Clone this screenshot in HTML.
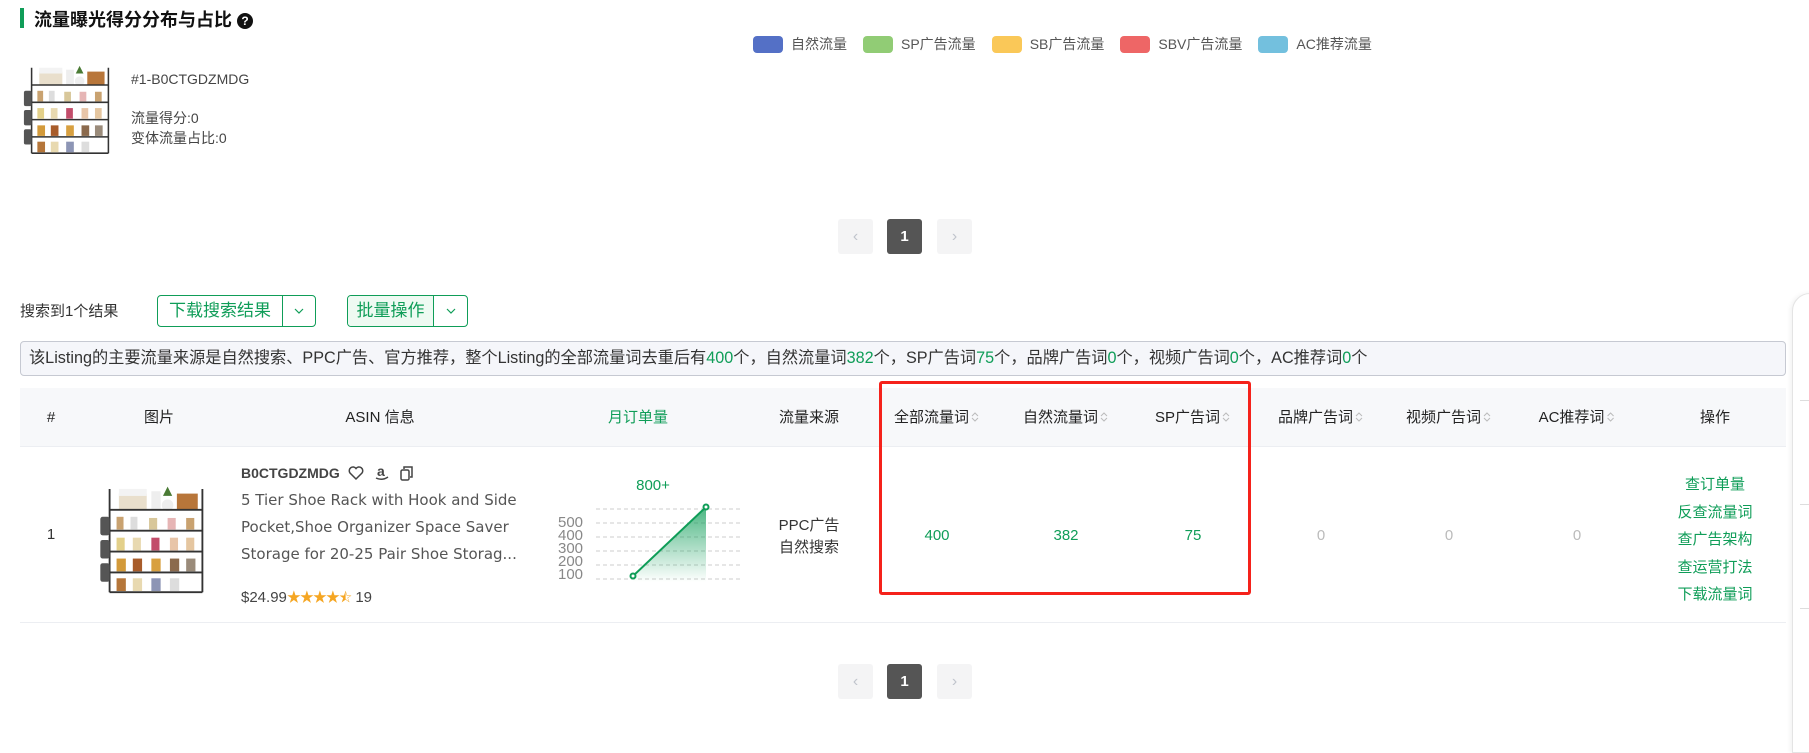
<!DOCTYPE html>
<html><head><meta charset="utf-8"><style>
*{box-sizing:border-box;margin:0;padding:0}
body{width:1809px;height:737px;overflow:hidden;background:#fff;font-family:"Liberation Sans","Noto Sans CJK SC",sans-serif;color:#333;position:relative;font-size:14px}
.a{position:absolute;white-space:nowrap}
.g{color:#0f9d58}
.pg{position:absolute;width:35px;height:35px;border-radius:3px;background:#f4f4f5;color:#c0c4cc;text-align:center;line-height:35px;font-size:16px}
.pg.on{background:#555;color:#fff;font-weight:bold;font-size:15px}
.hd{position:absolute;top:0;height:59px;line-height:59px;transform:translateX(-50%);font-size:15px;color:#222}
.srt{display:inline-block;width:10px;height:14px;vertical-align:-2px;margin-left:1px}
.c{position:absolute;transform:translateX(-50%);white-space:nowrap}
.lg{display:inline-block;width:30px;height:17px;border-radius:4px;margin:0 8px 0 16px}
</style></head><body>
<svg width="0" height="0" style="position:absolute"><defs>
<g id="rack">
<rect x="18" y="10" width="24" height="14" fill="#e9dfcc"/><rect x="18" y="6" width="24" height="6" fill="#f3f3f3"/>
<rect x="46" y="8" width="8" height="16" fill="#eee"/><circle cx="60" cy="20" r="5" fill="#eee"/><path d="M56 12 l4 -8 l4 8" fill="#4a7b35"/>
<rect x="68" y="10" width="18" height="14" fill="#b8763a"/>
<g stroke="#333" stroke-width="1.6" fill="none"><path d="M10 6 V95 M90 6 V95 M10 24 H90 M10 42 H90 M10 60 H90 M10 78 H90 M10 95 H90"/></g>
<g fill="#c9a270"><rect x="16" y="30" width="6" height="11"/><rect x="28" y="30" width="6" height="11" fill="#ddd"/><rect x="44" y="31" width="7" height="10" fill="#d8c79a"/><rect x="60" y="31" width="7" height="10" fill="#e6b5b5"/><rect x="76" y="31" width="7" height="10"/>
<rect x="16" y="48" width="7" height="11" fill="#e3d08a"/><rect x="30" y="48" width="7" height="11" fill="#e8d9b0"/><rect x="46" y="48" width="7" height="11" fill="#c24d6a"/><rect x="62" y="48" width="7" height="11" fill="#e8c5a8"/><rect x="76" y="48" width="7" height="11" fill="#e5c6a0"/>
<rect x="16" y="66" width="8" height="11" fill="#d39a3a"/><rect x="30" y="66" width="8" height="11" fill="#a85c2a"/><rect x="46" y="66" width="8" height="11" fill="#d8a040"/><rect x="62" y="66" width="8" height="11" fill="#8b6a4d"/><rect x="76" y="66" width="8" height="11" fill="#9a8b7a"/>
<rect x="16" y="83" width="8" height="11" fill="#b5763a"/><rect x="30" y="83" width="8" height="11" fill="#e8d9b0"/><rect x="46" y="83" width="8" height="11" fill="#8d95b5"/><rect x="62" y="83" width="8" height="11" fill="#ddd"/></g>
<g fill="#555"><rect x="2" y="30" width="8" height="16" rx="2"/><rect x="2" y="50" width="8" height="16" rx="2"/><rect x="2" y="70" width="8" height="16" rx="2"/></g>
</g>
<path id="chev" d="M1 1 L5 5 L9 1" fill="none" stroke="#0f9d58" stroke-width="1.2"/>
</defs></svg>

<div class="a" style="left:20px;top:8px;width:4px;height:20px;background:#0f9d58"></div>
<div class="a" style="left:34px;top:6px;font-size:18px;font-weight:bold;color:#111">流量曝光得分分布与占比 <span style="display:inline-block;width:16px;height:16px;border-radius:50%;background:#111;color:#fff;font-size:12px;text-align:center;line-height:16px;vertical-align:1px">?</span></div>

<div class="a" style="left:737px;top:34px;font-size:14px;color:#555;display:flex;align-items:center">
<span class="lg" style="background:#5470c6"></span>自然流量
<span class="lg" style="background:#91cc75"></span>SP广告流量
<span class="lg" style="background:#fac858"></span>SB广告流量
<span class="lg" style="background:#ee6666"></span>SBV广告流量
<span class="lg" style="background:#73c0de"></span>AC推荐流量
</div>

<svg class="a" style="left:22px;top:62px" width="96" height="96" viewBox="0 0 100 100"><use href="#rack"/></svg>
<div class="a" style="left:131px;top:71px;font-size:14px;color:#444">#1-B0CTGDZMDG</div>
<div class="a" style="left:131px;top:108px;font-size:14px;color:#444">流量得分:0</div>
<div class="a" style="left:131px;top:128px;font-size:14px;color:#444">变体流量占比:0</div>

<div class="pg" style="left:838px;top:219px">‹</div>
<div class="pg on" style="left:887px;top:219px">1</div>
<div class="pg" style="left:937px;top:219px">›</div>

<div class="a" style="left:20px;top:300px;font-size:15px;color:#333">搜索到1个结果</div>
<div class="a" style="left:157px;top:295px;width:159px;height:32px;border:1px solid #0f9d58;border-radius:4px;display:flex">
<div style="width:125px;border-right:1.5px solid #0f9d58;color:#0f9d58;font-size:17px;text-align:center;line-height:30px">下载搜索结果</div>
<div style="flex:1;display:flex;align-items:center;justify-content:center"><svg width="10" height="7"><use href="#chev"/></svg></div></div>
<div class="a" style="left:347px;top:295px;width:121px;height:32px;border:1px solid #0f9d58;border-radius:4px;display:flex;background:#fff;overflow:hidden">
<div style="width:86px;border-right:1px solid #0f9d58;color:#0f9d58;background:#eefaf2;font-size:17px;text-align:center;line-height:30px">批量操作</div>
<div style="flex:1;display:flex;align-items:center;justify-content:center"><svg width="10" height="7"><use href="#chev"/></svg></div></div>

<div class="a" style="left:20px;top:341px;width:1766px;height:35px;border:1px solid #c6c9d2;border-radius:4px;background:#f5f6fa;padding-left:8px;line-height:33px;font-size:16.2px;color:#333">该Listing的主要流量来源是自然搜索、PPC广告、官方推荐，整个Listing的全部流量词去重后有<span class="g">400</span>个，自然流量词<span class="g">382</span>个，SP广告词<span class="g">75</span>个，品牌广告词<span class="g">0</span>个，视频广告词<span class="g">0</span>个，AC推荐词<span class="g">0</span>个</div>

<div class="a" style="left:20px;top:388px;width:1766px;height:59px;background:#f7f8fa;border-bottom:1px solid #eceef2"></div>
<div class="a" style="left:0;top:388px;width:1809px;height:59px">
<div class="hd" style="left:51px">#</div>
<div class="hd" style="left:159px">图片</div>
<div class="hd" style="left:380px">ASIN 信息</div>
<div class="hd g" style="left:638px;color:#0f9d58">月订单量</div>
<div class="hd" style="left:809px">流量来源</div>
<div class="hd" style="left:937px">全部流量词<svg class="srt" viewBox="0 0 10 14"><path d="M2 6l3-3 3 3M2 8l3 3 3-3" fill="none" stroke="#bbb"/></svg></div>
<div class="hd" style="left:1066px">自然流量词<svg class="srt" viewBox="0 0 10 14"><path d="M2 6l3-3 3 3M2 8l3 3 3-3" fill="none" stroke="#bbb"/></svg></div>
<div class="hd" style="left:1193px">SP广告词<svg class="srt" viewBox="0 0 10 14"><path d="M2 6l3-3 3 3M2 8l3 3 3-3" fill="none" stroke="#bbb"/></svg></div>
<div class="hd" style="left:1321px">品牌广告词<svg class="srt" viewBox="0 0 10 14"><path d="M2 6l3-3 3 3M2 8l3 3 3-3" fill="none" stroke="#bbb"/></svg></div>
<div class="hd" style="left:1449px">视频广告词<svg class="srt" viewBox="0 0 10 14"><path d="M2 6l3-3 3 3M2 8l3 3 3-3" fill="none" stroke="#bbb"/></svg></div>
<div class="hd" style="left:1577px">AC推荐词<svg class="srt" viewBox="0 0 10 14"><path d="M2 6l3-3 3 3M2 8l3 3 3-3" fill="none" stroke="#bbb"/></svg></div>
<div class="hd" style="left:1715px">操作</div>
</div>
<div class="a" style="left:20px;top:622px;width:1766px;height:1px;background:#eceef2"></div>

<div class="c" style="left:51px;top:526px;font-size:15px">1</div>
<svg class="a" style="left:98px;top:482px" width="116" height="116" viewBox="0 0 100 100"><use href="#rack"/></svg>
<div class="a" style="left:241px;top:464px;font-size:14px;font-weight:bold;color:#444">B0CTGDZMDG
<svg width="16" height="16" viewBox="0 0 16 16" style="vertical-align:-3px;margin-left:4px"><path d="M8 14 L2 8 A3.2 3.2 0 0 1 8 3.5 A3.2 3.2 0 0 1 14 8 Z" fill="none" stroke="#444" stroke-width="1.5"/></svg>
<svg width="16" height="18" viewBox="0 0 16 18" style="vertical-align:-4px;margin-left:6px"><text x="3" y="12" font-size="14" font-weight="bold" font-family="Liberation Sans" fill="#444">a</text><path d="M2 14 Q8 17 14 13" fill="none" stroke="#444" stroke-width="1.5"/></svg>
<svg width="16" height="16" viewBox="0 0 16 16" style="vertical-align:-3px;margin-left:6px"><rect x="2" y="5" width="8" height="10" rx="1.5" fill="none" stroke="#444" stroke-width="1.5"/><path d="M5 4V2h8v10h-2" fill="none" stroke="#444" stroke-width="1.5"/></svg></div>
<div class="a" style="left:241px;top:487px;line-height:27px;color:#555;font-family:'DejaVu Sans','Noto Sans CJK SC',sans-serif;font-size:15px">5 Tier Shoe Rack with Hook and Side<br>Pocket,Shoe Organizer Space Saver<br>Storage for 20-25 Pair Shoe Storag...</div>
<div class="a" style="left:241px;top:587px;font-size:15px;color:#444">$24.99<span style="color:#f5a623;font-size:14px;letter-spacing:-1px">★★★★⯪</span> 19</div>

<div class="c g" style="left:653px;top:477px;font-size:15px">800+</div>
<svg class="a" style="left:556px;top:500px" width="190" height="90" viewBox="0 0 190 90">
<defs><linearGradient id="gr" x1="0" y1="0" x2="0" y2="1"><stop offset="0" stop-color="#0f9d58" stop-opacity=".75"/><stop offset="1" stop-color="#0f9d58" stop-opacity="0"/></linearGradient></defs>
<g stroke="#ccc" stroke-dasharray="4 3"><path d="M40 9H187M40 23H187M40 37H187M40 51H187M40 65H187M40 79H187"/></g>
<g fill="#888" font-size="15" font-family="Liberation Sans"><text x="2" y="27">500</text><text x="2" y="40">400</text><text x="2" y="53">300</text><text x="2" y="66">200</text><text x="2" y="79">100</text></g>
<path d="M77 76 L150 7 L150 82 L77 82Z" fill="url(#gr)"/>
<path d="M77 76 L150 7" stroke="#0f9d58" stroke-width="2"/>
<circle cx="77" cy="76" r="2.5" fill="#fff" stroke="#0f9d58" stroke-width="2"/><circle cx="150" cy="7" r="2.5" fill="#fff" stroke="#0f9d58" stroke-width="2"/>
</svg>

<div class="c" style="left:809px;top:515px;font-size:15px;line-height:22px;text-align:center;color:#333">PPC广告<br>自然搜索</div>
<div class="c g" style="left:937px;top:527px;font-size:15px">400</div>
<div class="c g" style="left:1066px;top:527px;font-size:15px">382</div>
<div class="c g" style="left:1193px;top:527px;font-size:15px">75</div>
<div class="c" style="left:1321px;top:527px;font-size:15px;color:#bbb">0</div>
<div class="c" style="left:1449px;top:527px;font-size:15px;color:#bbb">0</div>
<div class="c" style="left:1577px;top:527px;font-size:15px;color:#bbb">0</div>
<div class="c g" style="left:1715px;top:471px;font-size:15px;line-height:27.5px;text-align:center">查订单量<br>反查流量词<br>查广告架构<br>查运营打法<br>下载流量词</div>

<div class="a" style="left:879px;top:381px;width:372px;height:214px;border:3px solid #f5221b;border-radius:3px"></div>

<div class="pg" style="left:838px;top:664px">‹</div>
<div class="pg on" style="left:887px;top:664px">1</div>
<div class="pg" style="left:937px;top:664px">›</div>

<div class="a" style="left:1792px;top:293px;width:30px;height:460px;border:1px solid #e4e4e4;border-radius:18px 0 0 0;background:#fff;box-shadow:-2px 0 4px rgba(0,0,0,.05)"></div>
<div class="a" style="left:1800px;top:400px;width:9px;height:1px;background:#ddd"></div>
<div class="a" style="left:1800px;top:504px;width:9px;height:1px;background:#ddd"></div>
<div class="a" style="left:1800px;top:608px;width:9px;height:1px;background:#ddd"></div>
</body></html>
